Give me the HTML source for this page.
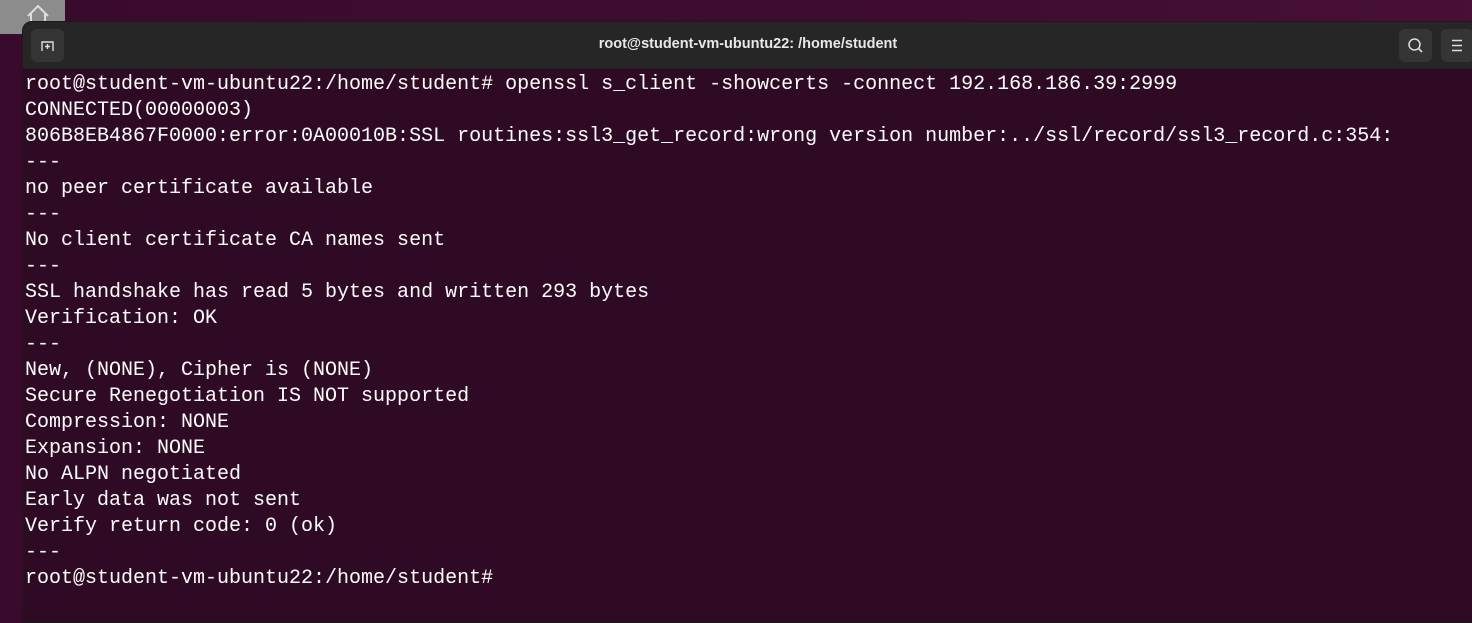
<!DOCTYPE html>
<html><head><style>
html,body{margin:0;padding:0;}
body{width:1472px;height:604px;overflow:hidden;background:linear-gradient(100deg,#3a0a2c 0%,#3f0c30 60%,#4a1038 100%);position:relative;font-family:"Liberation Sans",sans-serif;}
.icon{position:absolute;left:0;top:0;width:65px;height:34px;background:#8c8c8c;border-radius:0 0 6px 0;}
.win{position:absolute;left:22px;top:21px;width:1460px;height:600px;background:#2f0a24;border-radius:10px 0 0 0;border:1px solid #1a1a1a;overflow:hidden;}
.hdr{height:46px;background:#262626;position:relative;border-bottom:1px solid #1e1e1e;}
.title{position:absolute;left:0;width:1450px;top:14px;text-align:center;color:#e8e8e8;font-weight:bold;font-size:14.5px;}
.btn{position:absolute;top:7px;width:33px;height:33px;background:#353535;border-radius:6px;}
pre{margin:0;position:absolute;left:2px;top:50px;font-family:"Liberation Mono",monospace;font-size:20px;line-height:26px;color:#ffffff;}
</style></head><body>
<div class="icon"><svg width="65" height="34"><path d="M28 16 L38 6 L48 16 M31 14 V28 H45 V14" fill="none" stroke="#ddd" stroke-width="2"/></svg></div>
<div class="win">
<div class="hdr">
<div class="btn" style="left:8px"><svg width="33" height="33"><path d="M11 22 V13 H22 V22" fill="none" stroke="#ddd" stroke-width="1.4"/><path d="M14 17.5 H19 M16.5 15 V20" stroke="#ddd" stroke-width="1.4"/></svg></div>
<div class="title">root@student-vm-ubuntu22: /home/student</div>
<div class="btn" style="left:1376px"><svg width="33" height="33"><circle cx="15.5" cy="15.5" r="5.5" fill="none" stroke="#ddd" stroke-width="1.5"/><path d="M19.5 19.5 L23 23" stroke="#ddd" stroke-width="1.6"/></svg></div>
<div class="btn" style="left:1418px"><svg width="33" height="33"><path d="M11 11.5 H21 M11 16.5 H21 M11 21.5 H21" stroke="#ddd" stroke-width="1.5"/></svg></div>
</div>
<pre>root@student-vm-ubuntu22:/home/student# openssl s_client -showcerts -connect 192.168.186.39:2999
CONNECTED(00000003)
806B8EB4867F0000:error:0A00010B:SSL routines:ssl3_get_record:wrong version number:../ssl/record/ssl3_record.c:354:
---
no peer certificate available
---
No client certificate CA names sent
---
SSL handshake has read 5 bytes and written 293 bytes
Verification: OK
---
New, (NONE), Cipher is (NONE)
Secure Renegotiation IS NOT supported
Compression: NONE
Expansion: NONE
No ALPN negotiated
Early data was not sent
Verify return code: 0 (ok)
---
root@student-vm-ubuntu22:/home/student#</pre>
</div>
</body></html>
